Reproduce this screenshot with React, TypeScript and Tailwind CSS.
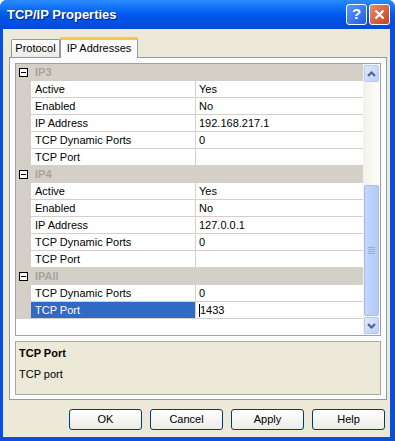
import React from 'react';

type Row = { name: string; value: string; selected?: boolean };
type Group = { title: string; rows: Row[] };

const groups: Group[] = [
  {
    title: 'IP3',
    rows: [
      { name: 'Active', value: 'Yes' },
      { name: 'Enabled', value: 'No' },
      { name: 'IP Address', value: '192.168.217.1' },
      { name: 'TCP Dynamic Ports', value: '0' },
      { name: 'TCP Port', value: '' },
    ],
  },
  {
    title: 'IP4',
    rows: [
      { name: 'Active', value: 'Yes' },
      { name: 'Enabled', value: 'No' },
      { name: 'IP Address', value: '127.0.0.1' },
      { name: 'TCP Dynamic Ports', value: '0' },
      { name: 'TCP Port', value: '' },
    ],
  },
  {
    title: 'IPAll',
    rows: [
      { name: 'TCP Dynamic Ports', value: '0' },
      { name: 'TCP Port', value: '1433', selected: true },
    ],
  },
];

function Minus() {
  return (
    <div className="w-[9px] h-[9px] border border-black bg-white flex items-center justify-center">
      <div className="w-[5px] h-px bg-black" />
    </div>
  );
}

function Arrow({ up }: { up?: boolean }) {
  return (
    <svg width="9" height="6" viewBox="0 0 9 6">
      <path
        d={up ? 'M1 5 L4.5 1.5 L8 5' : 'M1 1 L4.5 4.5 L8 1'}
        fill="none"
        stroke="#4d6185"
        strokeWidth="2"
      />
    </svg>
  );
}

function XpButton({ label }: { label: string }) {
  return (
    <button className="w-[73px] h-[21px] rounded-[3px] border border-[#003c74] bg-gradient-to-b from-white to-[#ecebe6] text-[11px] text-black">
      {label}
    </button>
  );
}

export default function App() {
  return (
    <div
      className="w-[395px] h-[441px] flex flex-col bg-[#0a4ee0] rounded-t-[7px] overflow-hidden"
      style={{ fontFamily: '"Liberation Sans", Arial, sans-serif' }}
    >
      {/* title bar */}
      <div className="h-[29px] shrink-0 flex items-center px-[7px] bg-gradient-to-b from-[#2a8bff] via-[#0058ee] to-[#0349d8]">
        <span className="flex-1 text-white font-bold text-[13px] [text-shadow:1px_1px_0_#0a1e78]">
          TCP/IP Properties
        </span>
        <div className="flex gap-[2px] mr-[-2px]">
          <div className="w-[21px] h-[21px] rounded-[3px] border border-white bg-gradient-to-br from-[#5d95ff] to-[#1f5ee8] flex items-center justify-center text-white font-bold text-[15px]">
            ?
          </div>
          <div className="w-[21px] h-[21px] rounded-[3px] border border-white bg-gradient-to-br from-[#e88a6a] to-[#c7401c] flex items-center justify-center">
            <svg width="11" height="11" viewBox="0 0 11 11">
              <path d="M1.5 1.5 L9.5 9.5 M9.5 1.5 L1.5 9.5" stroke="white" strokeWidth="2.2" />
            </svg>
          </div>
        </div>
      </div>

      {/* body */}
      <div className="flex-1 mx-[3px] mb-[4px] mr-[5px] bg-[#ece9d8] flex flex-col">
        {/* tabs */}
        <div className="h-[28px] flex items-end pl-[8px]">
          <div className="h-[18px] w-[49px] border border-b-0 border-[#919b9c] bg-gradient-to-b from-white to-[#ecebe6] rounded-t-[2px] text-[11px] flex items-center justify-center">
            Protocol
          </div>
          <div className="h-[21px] w-[78px] -mb-px relative z-10 border border-b-0 border-[#919b9c] border-t-[3px] border-t-[#ffc83c] bg-[#fcfcfe] rounded-t-[2px] text-[11px] flex items-center justify-center pb-[1px]">
            IP Addresses
          </div>
        </div>

        {/* tab panel */}
        <div className="ml-[6px] mr-[3px] h-[343px] border border-[#919b9c] bg-[#fcfcfe] px-[5px] pt-[5px] pb-[4px] flex flex-col gap-[5px]">
          {/* property grid */}
          <div className="h-[273px] border border-[#a0a0a0] bg-white flex">
            <div className="flex-1 flex flex-col">
              {groups.map((g) => (
                <div key={g.title} className="flex flex-col">
                  <div className="h-[17px] bg-[#d4d0c8] flex items-center border-b border-[#d4d0c8]">
                    <div className="w-[15px] flex justify-center">
                      <Minus />
                    </div>
                    <span className="pl-[4px] font-bold text-[11px] text-[#a6a39c]">{g.title}</span>
                  </div>
                  {g.rows.map((r, i) => (
                    <div key={i} className="h-[17px] flex bg-[#d4d0c8]">
                      <div className="w-[15px]" />
                      <div
                        className={`w-[165px] border-b border-r border-[#d4d0c8] pl-[4px] text-[11px] flex items-center ${
                          r.selected ? 'bg-[#316ac5] text-white' : 'bg-white text-black'
                        }`}
                      >
                        {r.name}
                      </div>
                      <div className="flex-1 bg-white border-b border-[#d4d0c8] pl-[3px] text-[11px] flex items-center text-black">
                        {r.selected && <span className="w-px h-[13px] bg-black" />}
                        {r.value}
                      </div>
                    </div>
                  ))}
                </div>
              ))}
            </div>

            {/* scrollbar */}
            <div className="w-[17px] flex flex-col bg-gradient-to-r from-[#f3f1ec] to-[#fefefb] py-px">
              <div className="h-[17px] mx-px rounded-[2px] border border-[#b9c9ef] bg-gradient-to-br from-[#e0e9fe] to-[#bacffb] flex items-center justify-center">
                <Arrow up />
              </div>
              <div className="h-[103px]" />
              <div className="flex-1 mx-px rounded-[2px] border border-[#a8bcef] bg-gradient-to-r from-[#c5d6fc] to-[#b4caf9] flex flex-col items-center justify-center gap-[1px]">
                <div className="w-[7px] h-px bg-[#8fabed]" />
                <div className="w-[7px] h-px bg-[#8fabed]" />
                <div className="w-[7px] h-px bg-[#8fabed]" />
                <div className="w-[7px] h-px bg-[#8fabed]" />
              </div>
              <div className="h-[17px] mx-px mt-px rounded-[2px] border border-[#b9c9ef] bg-gradient-to-br from-[#e0e9fe] to-[#bacffb] flex items-center justify-center">
                <Arrow />
              </div>
            </div>
          </div>

          {/* description */}
          <div className="flex-1 border border-[#aca899] bg-[#ece9d8] px-[3px] pt-[3px] text-[11px] flex flex-col gap-[4px]">
            <span className="font-bold text-black">TCP Port</span>
            <span className="text-black">TCP port</span>
          </div>
        </div>

        {/* buttons */}
        <div className="flex justify-end gap-[8px] pr-[5px] mt-[9px]">
          <XpButton label="OK" />
          <XpButton label="Cancel" />
          <XpButton label="Apply" />
          <XpButton label="Help" />
        </div>
      </div>
    </div>
  );
}
